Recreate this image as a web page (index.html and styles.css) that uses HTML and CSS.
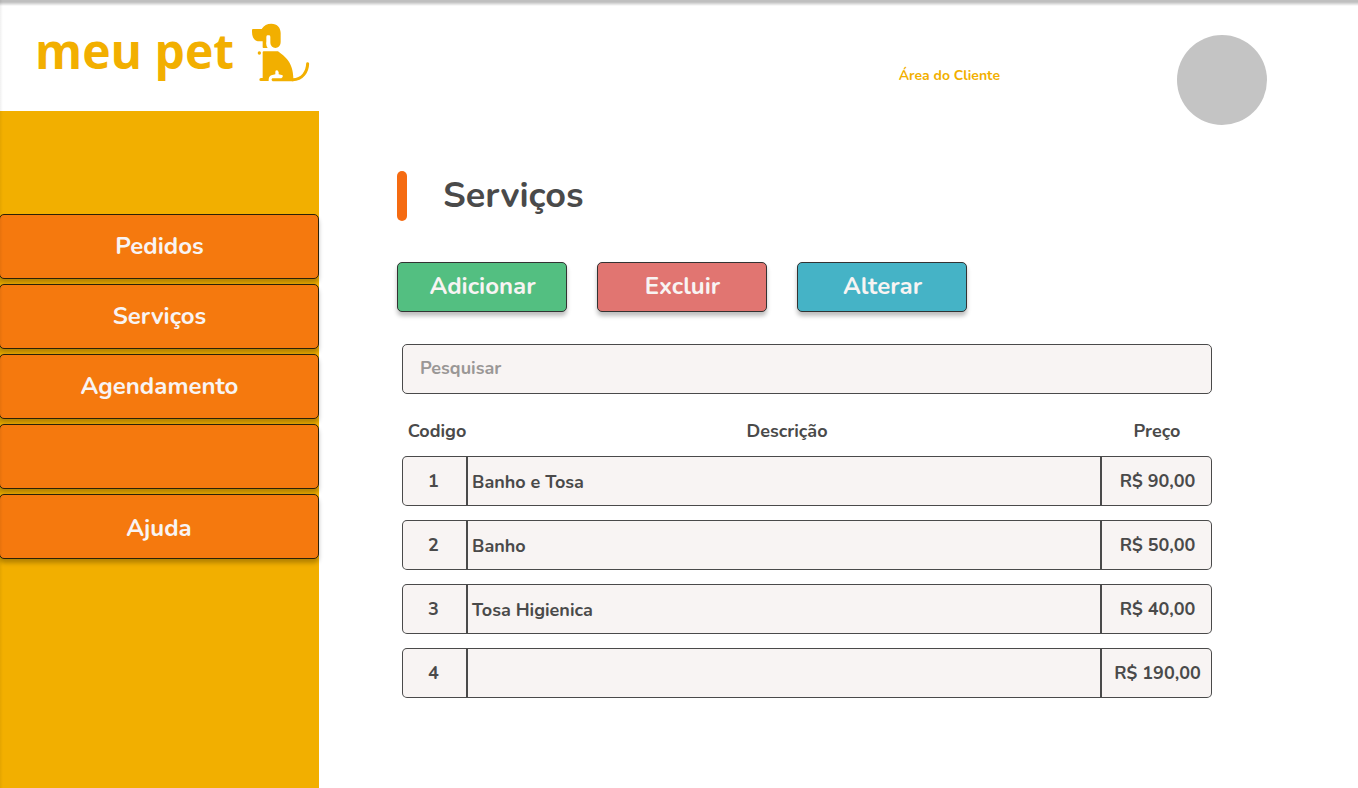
FILE: index.html
```html
<!DOCTYPE html>
<html lang="pt-BR">
<head>
<meta charset="utf-8">
<meta name="viewport" content="width=device-width, initial-scale=1">
<title>meu pet - Serviços</title>
<link rel="stylesheet" href="styles.css">
</head>
<body>
<div class="page">
  <aside class="sidebar">
    <a class="brand" href="#">
      <span class="brand-name">meu pet</span>
      <svg class="brand-dog" viewBox="18 24 177 177" aria-hidden="true">
        <path fill="currentColor" d="M24 42H50Q60 26 79 26C97 26 107 38 107 54V80C107 105 76 104 76 82V66Q76 62 73 61H67Q64 61 64 67V80Q62 92 68 99H55Q53 99 53 96V79H43C28 79 21 67 21 50V45Q21 42 24 42Z"/>
        <path fill="currentColor" d="M56 109H99C119 124 144 141 145 189V199H83Q77 195 82 190H109Q115 187 113 181L101 178Q103 170 97 166Q90 165 91 172V178L79 181Q70 185 71 198H48Q43 198 43 194Q43 189 48 189H53V112Q53 109 56 109Z"/>
        <path fill="none" stroke="currentColor" stroke-width="9" stroke-linecap="round" d="M143 194C173 194 187 170 188 146"/>
        <circle fill="currentColor" cx="43" cy="114" r="5"/>
      </svg>
    </a>
    <nav class="menu" aria-label="Menu principal">
      <button class="menu-item" type="button">Pedidos</button>
      <button class="menu-item" type="button">Serviços</button>
      <button class="menu-item" type="button">Agendamento</button>
      <button class="menu-item" type="button" aria-label="Sem título"></button>
      <button class="menu-item" type="button">Ajuda</button>
    </nav>
  </aside>
  <main class="main">
    <header class="topbar">
      <a class="client-link" href="#">Área do Cliente</a>
      <div class="avatar"></div>
    </header>
    <section class="content">
      <h1 class="title">Serviços</h1>
      <div class="actions">
        <button class="action add" type="button">Adicionar</button>
        <button class="action remove" type="button">Excluir</button>
        <button class="action edit" type="button">Alterar</button>
      </div>
      <div class="listing">
        <input class="search" type="search" placeholder="Pesquisar" aria-label="Pesquisar">
        <table class="services">
          <thead>
            <tr><th class="code" scope="col">Codigo</th><th class="description" scope="col">Descrição</th><th class="price" scope="col">Preço</th></tr>
          </thead>
          <tbody>
            <tr><td>1</td><td>Banho e Tosa</td><td>R$ 90,00</td></tr>
            <tr><td>2</td><td>Banho</td><td>R$ 50,00</td></tr>
            <tr><td>3</td><td>Tosa Higienica</td><td>R$ 40,00</td></tr>
            <tr><td>4</td><td></td><td>R$ 190,00</td></tr>
          </tbody>
        </table>
      </div>
    </section>
  </main>
</div>
</body>
</html>
```
FILE: styles.css
```css
* { box-sizing: border-box; }

body {
  margin: 0;
  background: #fff;
  color: #4a4a4a;
  font-family: Nunito, Lato, "Open Sans", sans-serif;
  font-weight: 700;
}

button, input { font: inherit; }

.page {
  position: relative;
  display: grid;
  grid-template-columns: 319px 1fr;
  min-height: 100vh;
}

/* soft shade along the top and left edges, over every panel */
.page::after {
  content: "";
  position: absolute;
  inset: 0;
  pointer-events: none;
  background:
    linear-gradient(rgba(0, 0, 0, .25) 2px, transparent 6px) top / 100% 6px no-repeat,
    linear-gradient(90deg, rgba(0, 0, 0, .06), transparent) left / 3px 100% no-repeat;
}

.sidebar {
  display: flex;
  flex-direction: column;
  background: #f2af00;
}

.brand {
  display: flex;
  align-items: flex-start;
  justify-content: space-between;
  height: 111px;
  padding: 23px 9px 0 35px;
  background: #fff;
  color: #f2af00;
  text-decoration: none;
}

.brand-name {
  font: 700 48px/56px "Open Sans", sans-serif;
}

.brand-dog {
  width: 59px;
  height: 59px;
}

.menu {
  display: grid;
  gap: 5px;
  margin: 103px 0 0 -1px;
}

.menu-item {
  height: 65px;
  padding: 0 0 2px 1px;
  border: 1px solid #2b2107;
  border-radius: 5px;
  background: #f5790e;
  box-shadow: 0 4px 4px rgba(0, 0, 0, .25);
  color: #f8f4f3;
  font-size: 24px;
}

.menu-item:last-child { padding: 2px 0 0; }

.topbar {
  display: flex;
  justify-content: flex-end;
  align-items: center;
  gap: 177px;
  padding: 35px 91px 0 0;
}

.client-link {
  padding-bottom: 10px;
  color: #f2af00;
  font-size: 14px;
  text-decoration: none;
}

.avatar {
  width: 90px;
  height: 90px;
  border-radius: 50%;
  background: #c4c4c4;
}

.content { padding: 46px 146px 40px 78px; }

.title {
  display: flex;
  gap: 36px;
  margin: 0;
  font-size: 36px;
  font-weight: 700;
  line-height: 50px;
}

.title::before {
  content: "";
  width: 10px;
  border-radius: 5px;
  background: #f56b12;
}

.actions {
  display: flex;
  gap: 30px;
  margin-top: 41px;
}

.action {
  width: 170px;
  height: 50px;
  padding: 0 0 2px 1px;
  border: 1px solid #333;
  border-radius: 5px;
  box-shadow: 0 4px 4px rgba(0, 0, 0, .25);
  color: #f8f4f3;
  font-size: 24px;
}

.add { background: #53bf81; }
.remove { background: #e17571; }
.edit { background: #45b3c6; }

.listing { padding: 32px 0 0 5px; }

.search {
  display: block;
  width: 100%;
  height: 50px;
  padding: 0 17px 2px;
  border: 1px solid #4a4a4a;
  border-radius: 5px;
  background: #f8f4f3;
  color: #4a4a4a;
  font-size: 18px;
  appearance: none;
}

.search::placeholder {
  color: #9a9796;
  opacity: 1;
}

.services {
  width: 100%;
  margin-top: 10px;
  border-spacing: 0 14px;
  table-layout: fixed;
  font-size: 18px;
  line-height: 24px;
}

.services th {
  padding: 2px 0 0;
  line-height: 22px;
}

.services .code { width: 66px; padding-left: 4px; }
.services .description { padding-left: 6px; }
.services .price { width: 112px; padding-left: 2px; }

.services td {
  height: 50px;
  padding: 0;
  border: solid #4a4a4a;
  border-width: 1px 0;
  background: #f8f4f3;
  text-align: center;
}

.services td:first-child {
  padding-right: 2px;
  border-width: 1px 2px 1px 1px;
  border-radius: 5px 0 0 5px;
}

.services td:nth-child(2) {
  padding: 2px 4px 0;
  text-align: left;
}

.services td:last-child {
  padding-left: 2px;
  border-width: 1px 1px 1px 2px;
  border-radius: 0 5px 5px 0;
}
```
